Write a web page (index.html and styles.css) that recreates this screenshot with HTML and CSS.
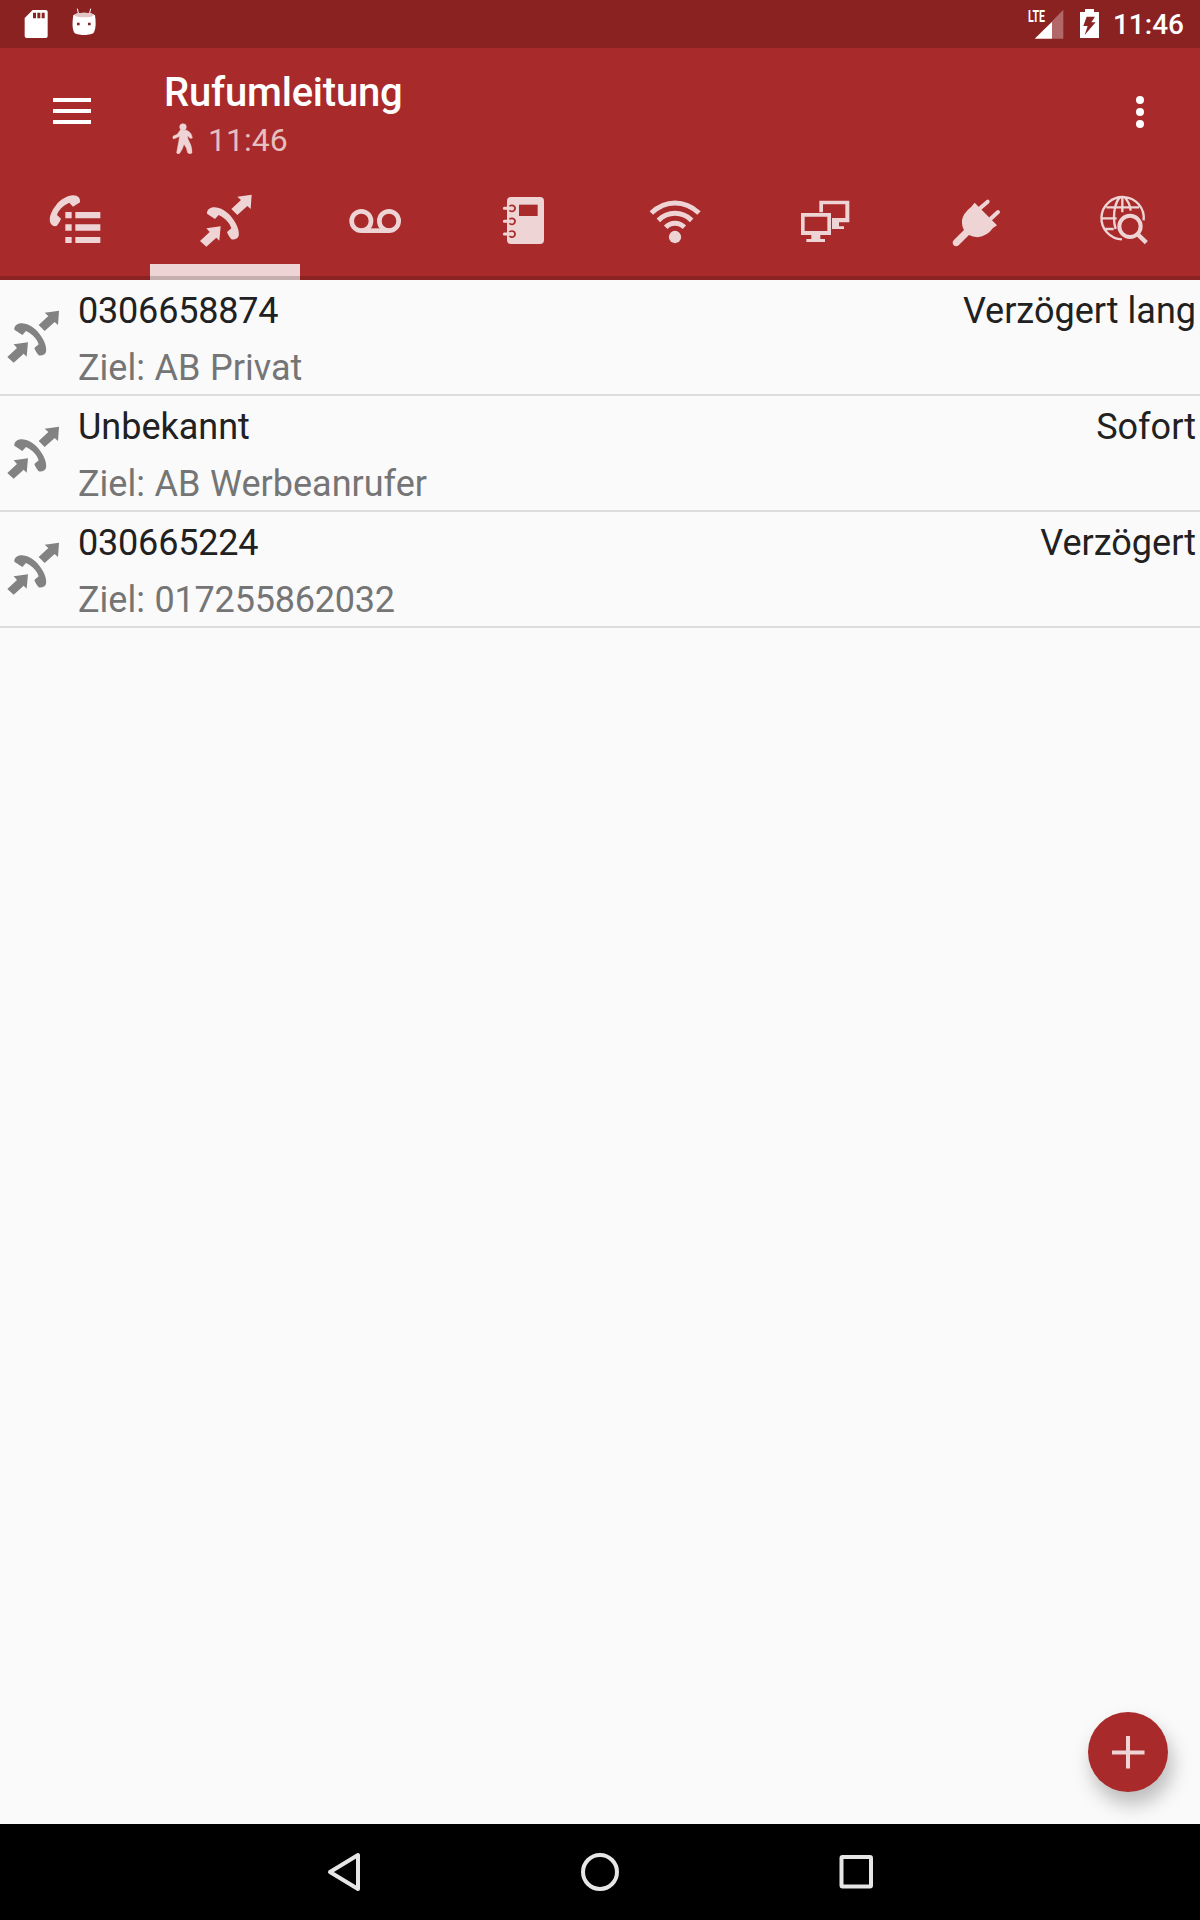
FILE: index.html
```html
<!DOCTYPE html>
<html lang="de">
<head>
<meta charset="utf-8">
<title>Rufumleitung</title>
<link rel="stylesheet" href="styles.css">
</head>
<body>
<svg class="defs" aria-hidden="true">
  <symbol id="divert" viewBox="0 0 160 160" overflow="visible">
    <path d="M155 0 L152 43 L142 34 L112 61 L94 43 L123 16 L112 6 Z"/>
    <path d="M62 95 L58 138 L49 129 L19 156 L0 139 L29 112 L19 101 Z"/>
    <path d="M21 57 C20 46 30 38 43 38 C60 38 81 50 96 69 C112 89 119 110 116 124 C113 132 105 136 94 134 C88 127 84 120 81 112 L94 101 C90 86 76 71 56 61 L45 73 Z"/>
  </symbol>
</svg>
<div class="screen">
  <header class="status">
    <svg class="status-left" viewBox="0 0 360 144">
      <path fill="#fff" d="M98 30H137Q143 30 143 36V108Q143 114 137 114H80Q74 114 74 108V54Z"/>
      <path fill="#8b2222" d="M99 38h9v17h-9zM112 38h9v17h-9zM125 38h9v17h-9z"/>
      <path fill="none" stroke="#fff" stroke-width="3" d="M232 26L236 43M272 26L268 43"/>
      <path fill="#fff" d="M220 46C231 36 274 36 285 46C288 66 288 84 282 97C275 108 229 108 222 97C216 84 217 65 220 46Z"/>
      <ellipse fill="#e2c6c6" cx="252.500" cy="45" rx="29" ry="7"/>
      <path fill="#8b2222" d="M231 68h8v8h-8zM264 68h8v8h-8z"/>
    </svg>
    <div class="status-right">
      <div class="signal">
        <span class="lte">LTE</span>
        <svg viewBox="75 0 165 144">
          <path fill="#b26868" d="M190 29V116H156V64Z"/>
          <path fill="#fff" d="M156 65V116H104Z"/>
        </svg>
      </div>
      <svg class="battery" viewBox="240 0 58 144"><path fill="#fff" d="M255 27h27v9h15v78h-57V36h15z"/><path fill="#8b2222" d="M260 50H285L274 67H287L254 105L263 78H250Z"/></svg>
      <span class="clock">11:46</span>
    </div>
  </header>
  <div class="toolbar">
    <svg class="menu" viewBox="0 0 38 26"><path fill="#fff" d="M0 0h38v4H0zM0 11h38v4H0zM0 22h38v4H0z"/></svg>
    <div class="titles">
      <h1>Rufumleitung</h1>
      <div class="subtitle">
        <svg viewBox="516 366 63 94"><g fill="#eed4d4" stroke="#eed4d4" stroke-width="1.500"><circle cx="549" cy="378" r="10"/><path d="M541 387L560 388Q575 394 577 411Q570 415 567 408L563 404Q562 412 567 421Q576 435 576 456Q569 461 563 455Q561 440 552 430Q547 447 539 457Q532 461 530 455Q533 438 536 423L539 406L521 414Q516 410 520 405L532 400Z"/></g></svg>
        <span>11:46</span>
      </div>
    </div>
    <svg class="more" viewBox="0 0 8 32"><g fill="#fff"><circle cx="4" cy="4" r="4"/><circle cx="4" cy="16" r="4"/><circle cx="4" cy="28" r="4"/></g></svg>
  </div>
  <nav class="tabs">
    <svg viewBox="-90 -12 450 300"><path d="M106 96h19v19h-19zM136 96h75v19h-75zM106 133h19v19h-19zM136 133h75v19h-75zM106 171h19v18h-19zM136 171h75v18h-75z"/><path d="M150 67C152 55 144 46 130 46C112 47 91 58 77 77C64 93 57 111 60 125C63 135 70 140 80 138Q90 126 93 116L81 105C85 91 98 77 118 68L129 80Z"/></svg>
    <svg viewBox="0 -12 450 300"><use href="#divert" x="150" y="44" width="160" height="160"/></svg>
    <svg viewBox="-90 -12 450 300"><g fill="none" stroke="#eed4d4" stroke-width="14"><circle cx="94" cy="123" r="29"/><circle cx="177" cy="123" r="29"/><path d="M93 152H177"/></g></svg>
    <svg viewBox="360 -12 450 300">
      <rect x="531" y="51" width="111" height="141" rx="12"/>
      <path fill="#a92a2a" d="M567 74h56v34h-56z"/>
      <g fill="none" stroke="#a92a2a" stroke-width="5"><path d="M538 79Q546 73 553 79Q558 86 552 92Q546 97 538 91M538 118Q546 112 553 118Q558 125 552 131Q546 136 538 130M538 156Q546 150 553 156Q558 163 552 169Q546 174 538 168"/></g>
      <path fill="none" stroke="#eed4d4" stroke-width="9" stroke-linecap="round" d="M523 85H544M523 124H544M523 162H544"/>
    </svg>
    <svg viewBox="-90 -12 450 300"><circle cx="135" cy="171" r="18.500"/><g fill="none" stroke="#eed4d4" stroke-width="15"><path d="M64 99Q96 69 135 69Q174 69 207 99M85 121Q107 100 135 100Q163 100 185 121M107 142Q119 130 135 130Q151 130 163 142"/></g></svg>
    <svg viewBox="360 -12 450 300"><path fill-rule="evenodd" d="M513 99h90v66h-90zM524 110v43h68v-43zM544 165h27v12h14v9h-56v-9h15z"/><path d="M568 62h90v65h-31v12h15v8h-36v-33h40V73h-67v24h-11z"/></svg>
    <svg viewBox="-90 -12 450 300"><path d="M134 68L201 136L189 144Q171 169 143 172Q128 171 117 165L86 196Q78 202 71 196Q65 188 71 181L102 150Q95 139 96 121Q98 101 124 80Z"/><path fill="none" stroke="#eed4d4" stroke-width="12" stroke-linecap="round" d="M151 84L173 65M182 116L204 96"/></svg>
    <svg viewBox="360 -12 450 300"><g fill="none" stroke="#eed4d4" stroke-width="7"><path d="M641 121A63.500 63.500 0 1 0 576 178M529 82H627M513 115H560M526 147H551M569 51Q552 76 552 111Q552 133 557 147M577 50V97M571 51Q557 65 554 88M583 51Q599 67 602 92"/><circle cx="600" cy="139" r="32" stroke-width="12"/><path stroke-width="13" d="M621 161L649 188"/></g></svg>
  </nav>
  <main class="list">
    <article class="row">
      <svg viewBox="0 -30 240 342"><use href="#divert" x="22" y="62" width="160" height="160"/></svg>
      <div class="info"><p class="name number">0306658874</p><p class="target">Ziel: AB Privat</p></div>
      <p class="mode">Verzögert lang</p>
    </article>
    <article class="row">
      <svg viewBox="0 -30 240 342"><use href="#divert" x="22" y="62" width="160" height="160"/></svg>
      <div class="info"><p class="name">Unbekannt</p><p class="target">Ziel: AB Werbeanrufer</p></div>
      <p class="mode">Sofort</p>
    </article>
    <article class="row">
      <svg viewBox="0 -30 240 342"><use href="#divert" x="22" y="62" width="160" height="160"/></svg>
      <div class="info"><p class="name number">030665224</p><p class="target">Ziel: <span class="number">017255862032</span></p></div>
      <p class="mode">Verzögert</p>
    </article>
  </main>
  <button class="fab" aria-label="Neu"><svg viewBox="0 0 80 80"><path fill="#eed4d4" d="M38 24h4v14.500h14.500v4H42V56.500h-4V42.500H24v-4h14z"/></svg></button>
  <footer class="navbar">
    <svg viewBox="0 0 48 48"><path d="M34 7V41L6 24Z" transform="translate(4 0)"/></svg>
    <svg viewBox="0 0 48 48"><circle cx="24" cy="24" r="17"/></svg>
    <svg viewBox="0 0 48 48"><rect x="9.500" y="9" width="29.500" height="29.500" rx="1"/></svg>
  </footer>
</div>
</body>
</html>
```
FILE: styles.css
```css
* { box-sizing: border-box; }
body { margin: 0; font-family: Roboto, "Liberation Sans", sans-serif; }
h1, p { margin: 0; font-weight: 400; }
svg { display: block; flex: none; }
.defs { position: absolute; width: 0; height: 0; }

.screen {
  position: relative;
  display: flex;
  flex-direction: column;
  width: 1200px;
  height: 1920px;
  overflow: hidden;
  background: #fafafa;
}

.status {
  display: flex;
  justify-content: space-between;
  height: 48px;
  flex: none;
  background: #8b2222;
  color: #fff;
}
.status-left { width: 120px; height: 48px; }
.status-right { display: flex; padding-right: 16px; }
.signal { position: relative; width: 55px; height: 48px; }
.signal svg { width: 55px; height: 48px; }
.lte {
  position: absolute;
  left: 3px;
  top: 8px;
  font-size: 17px;
  line-height: 17px;
  font-weight: 700;
  transform: scaleX(.62);
  transform-origin: left;
}
.battery { width: 19.300px; height: 48px; }
.clock { margin-left: 14px; font-size: 28px; line-height: 50px; font-weight: 500; }

.toolbar {
  display: flex;
  align-items: flex-start;
  height: 128px;
  flex: none;
  background: #a92a2a;
  color: #fff;
}
.menu { width: 38px; height: 26px; margin: 50px 0 0 53px; }
.titles { flex: 1; padding: 21px 0 0 73px; }
h1 { font-size: 40px; line-height: 48px; font-weight: 500; letter-spacing: -.2px; }
.subtitle {
  display: flex;
  align-items: center;
  gap: 15px;
  height: 46px;
  padding-left: 8px;
  font-size: 32px;
  line-height: 46px;
  color: #e5bfbf;
}
.subtitle svg { width: 21px; height: 31.300px; margin-bottom: 3px; }
.more { width: 8px; height: 32px; margin: 48px 56px 0 0; }

.tabs {
  display: flex;
  height: 104px;
  flex: none;
  background: linear-gradient(#0000 100px, #0000002c 100px), linear-gradient(#eed4d4, #eed4d4) 150px 88px / 150px 16px no-repeat, #a92a2a;
}
.tabs svg { width: 150px; height: 100px; fill: #eed4d4; }

.list { flex: 1; }
.row {
  display: flex;
  height: 116px;
  padding-right: 4px;
  border-bottom: 2px solid #dcdcdc;
  font-size: 36px;
  color: #212121;
}
.row svg { width: 80px; height: 114px; margin-right: -2px; fill: #828282; }
.info { flex: 1; padding-top: 3px; }
.row p { line-height: 57px; }
.target { color: #757575; word-spacing: .7px; }
.number { letter-spacing: -.2px; }
.mode { padding-top: 3px; }

.fab {
  position: absolute;
  right: 32px;
  bottom: 128px;
  width: 80px;
  height: 80px;
  padding: 0;
  border: 0;
  border-radius: 50%;
  background: #a92a2a;
  box-shadow: 4px 12px 20px #00000042;
}

.navbar {
  position: relative;
  display: flex;
  justify-content: center;
  align-items: center;
  gap: 208px;
  height: 96px;
  flex: none;
  background: #000;
}
.navbar svg {
  width: 48px;
  height: 48px;
  fill: none;
  stroke: #e6e6e6;
  stroke-width: 4;
  stroke-linejoin: round;
}
```
